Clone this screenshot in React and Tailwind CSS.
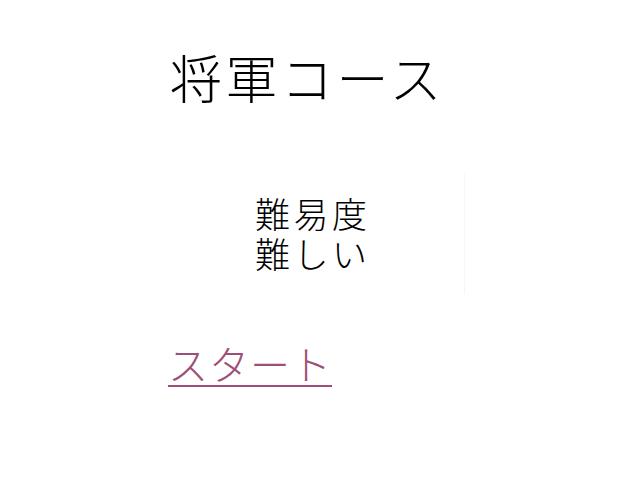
export default function App() {
  return (
    <div
      className="w-[640px] h-[480px] bg-white text-black overflow-hidden"
      style={{ fontFamily: '"Noto Sans CJK JP", "Noto Sans", sans-serif' }}
    >
      <div className="pl-[170px] pt-[41px]">
        <h1 className="text-[52px] leading-[72px] font-light tracking-[3.5px]">将軍コース</h1>
      </div>
      <div className="mt-[61px] flex">
        <div className="ml-[176px] w-[289px] h-[120px] border-r border-[#f6f6f6] flex flex-col justify-center pl-[79px]">
          <p className="text-[35px] leading-[40px] font-light tracking-[3.5px] pb-[2px]">
            難易度
            <br />
            難しい
          </p>
        </div>
      </div>
      <div className="pl-[168px] mt-[47px]">
        <a href="#" className="text-[40px] leading-[44px] font-light tracking-[1px] text-[#9d4f77] border-b-2 border-[#9d4f77] inline-block">
          スタート
        </a>
      </div>
    </div>
  );
}
